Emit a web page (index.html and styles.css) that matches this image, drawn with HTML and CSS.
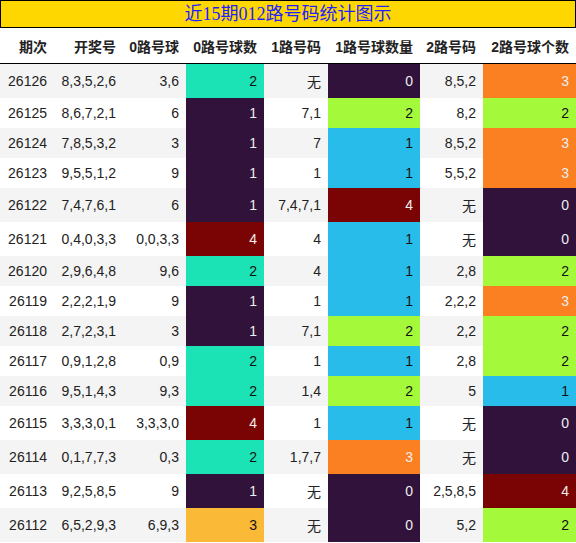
FILE: index.html
```html
<!DOCTYPE html>
<html lang="zh">
<head>
    <meta charset="UTF-8">
    <title>近15期012路号码统计图示</title>
    <link rel="stylesheet" href="styles.css">
</head>
<body>
    <div class="title">近15期012路号码统计图示</div>

    <table class="stats">
        <colgroup>
            <col class="w-issue">
            <col class="w-draw">
            <col class="w-nums">
            <col class="w-count">
            <col class="w-nums1">
            <col class="w-count1">
            <col class="w-nums2">
            <col class="w-count2">
        </colgroup>
        <thead>
            <tr>
                <th>期次</th>
                <th>开奖号</th>
                <th>0路号球</th>
                <th>0路号球数</th>
                <th>1路号码</th>
                <th>1路号球数量</th>
                <th>2路号码</th>
                <th>2路号球个数</th>
            </tr>
        </thead>
        <tbody>
            <tr><td>26126</td><td>8,3,5,2,6</td><td>3,6</td><td class="c2">2</td><td>无</td><td class="c0">0</td><td>8,5,2</td><td class="c3">3</td></tr>
            <tr><td>26125</td><td>8,6,7,2,1</td><td>6</td><td class="c0">1</td><td>7,1</td><td class="c2b">2</td><td>8,2</td><td class="c2b">2</td></tr>
            <tr><td>26124</td><td>7,8,5,3,2</td><td>3</td><td class="c0">1</td><td>7</td><td class="c1">1</td><td>8,5,2</td><td class="c3">3</td></tr>
            <tr><td>26123</td><td>9,5,5,1,2</td><td>9</td><td class="c0">1</td><td>1</td><td class="c1">1</td><td>5,5,2</td><td class="c3">3</td></tr>
            <tr><td>26122</td><td>7,4,7,6,1</td><td>6</td><td class="c0">1</td><td>7,4,7,1</td><td class="c4">4</td><td>无</td><td class="c0">0</td></tr>
            <tr><td>26121</td><td>0,4,0,3,3</td><td>0,0,3,3</td><td class="c4">4</td><td>4</td><td class="c1">1</td><td>无</td><td class="c0">0</td></tr>
            <tr><td>26120</td><td>2,9,6,4,8</td><td>9,6</td><td class="c2">2</td><td>4</td><td class="c1">1</td><td>2,8</td><td class="c2b">2</td></tr>
            <tr><td>26119</td><td>2,2,2,1,9</td><td>9</td><td class="c0">1</td><td>1</td><td class="c1">1</td><td>2,2,2</td><td class="c3">3</td></tr>
            <tr><td>26118</td><td>2,7,2,3,1</td><td>3</td><td class="c0">1</td><td>7,1</td><td class="c2b">2</td><td>2,2</td><td class="c2b">2</td></tr>
            <tr><td>26117</td><td>0,9,1,2,8</td><td>0,9</td><td class="c2">2</td><td>1</td><td class="c1">1</td><td>2,8</td><td class="c2b">2</td></tr>
            <tr><td>26116</td><td>9,5,1,4,3</td><td>9,3</td><td class="c2">2</td><td>1,4</td><td class="c2b">2</td><td>5</td><td class="c1">1</td></tr>
            <tr><td>26115</td><td>3,3,3,0,1</td><td>3,3,3,0</td><td class="c4">4</td><td>1</td><td class="c1">1</td><td>无</td><td class="c0">0</td></tr>
            <tr><td>26114</td><td>0,1,7,7,3</td><td>0,3</td><td class="c2">2</td><td>1,7,7</td><td class="c3">3</td><td>无</td><td class="c0">0</td></tr>
            <tr><td>26113</td><td>9,2,5,8,5</td><td>9</td><td class="c0">1</td><td>无</td><td class="c0">0</td><td>2,5,8,5</td><td class="c4">4</td></tr>
            <tr><td>26112</td><td>6,5,2,9,3</td><td>6,9,3</td><td class="c3b">3</td><td>无</td><td class="c0">0</td><td>5,2</td><td class="c2b">2</td></tr>
        </tbody>
    </table>
</body>
</html>
```

FILE: styles.css
```css
body {
    margin: 0;
    background: #fff;
    font-family: "Liberation Sans", "Noto Sans CJK SC", sans-serif;
    font-size: 14px;
    color: #222;
}

/* Title bar */
.title {
    box-sizing: border-box;
    height: 28px;
    line-height: 26px;
    border: 1px solid #000;
    background-color: #ffd700;
    color: #1f1fff;
    text-align: center;
    font-family: "Liberation Serif", "Noto Sans CJK SC", serif;
    font-size: 18px;
}

/* Table */
.stats {
    width: 576px;
    border-collapse: collapse;
    table-layout: fixed;
}

.w-issue { width: 54px; }
.w-draw { width: 69px; }
.w-nums { width: 63px; }
.w-count { width: 78px; }
.w-nums1 { width: 64px; }
.w-count1 { width: 92px; }
.w-nums2 { width: 63px; }
.w-count2 { width: 93px; }

.stats th,
.stats td {
    padding: 7px 7px 7px 0;
    text-align: right;
    white-space: nowrap;
}

.stats th {
    padding-top: 8px;
    font-weight: bold;
    border-bottom: 1px solid #000;
    background: #fff;
}

.stats tbody tr:nth-child(odd) {
    background-color: #f4f4f4;
}

/* Colour scale for the counts */
.c0 { background-color: #30123b; color: #eee; }
.c1 { background-color: #28bceb; color: #111; }
.c2 { background-color: #1be3b5; color: #111; }
.c2b { background-color: #a4f93b; color: #111; }
.c3 { background-color: #fb8022; color: #eee; }
.c3b { background-color: #fbb938; color: #111; }
.c4 { background-color: #7a0403; color: #eee; }
```
